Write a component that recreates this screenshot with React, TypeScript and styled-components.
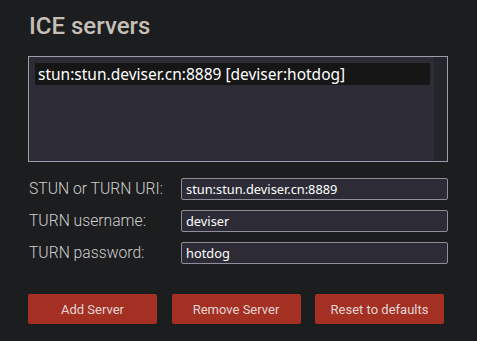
import styled, { createGlobalStyle } from 'styled-components';

const GlobalStyle = createGlobalStyle`
  html, body {
    margin: 0;
    padding: 0;
    background: #1c1d1f;
  }
`;

const Page = styled.div`
  padding: 10px 29px 0 28px;
  width: 477px;
  height: 341px;
  box-sizing: border-box;
  font-family: Roboto, 'Liberation Sans', sans-serif;
`;

const Title = styled.h2`
  margin: 0 0 14px 1px;
  font-size: 24px;
  font-weight: 500;
  line-height: 32px;
  color: #c6bfb7;
`;

const ListBox = styled.div`
  display: flex;
  width: 420px;
  height: 106px;
  box-sizing: border-box;
  border: 1px solid #9d9caa;
  background: #2c2b36;
`;

const Options = styled.div`
  flex: 1;
  padding: 6px 4px 0 6px;
`;

const Option = styled.div<{ $selected?: boolean }>`
  height: 22px;
  line-height: 22px;
  padding-left: 3px;
  background: ${(p) => (p.$selected ? '#161616' : 'transparent')};
  color: #ffffff;
  font-family: 'Noto Sans', 'DejaVu Sans', sans-serif;
  font-size: 15.5px;
  white-space: nowrap;
`;

const ScrollTrack = styled.div`
  width: 13px;
  background: #23252a;
`;

const Form = styled.div`
  display: grid;
  grid-template-columns: 153px 267px;
  row-gap: 10px;
  margin-top: 16px;
`;

const Label = styled.label`
  font-size: 15.7px;
  font-weight: 300;
  color: #cfcfcf;
  line-height: 22px;
  padding-left: 1px;
`;

const Input = styled.input`
  height: 22px;
  box-sizing: border-box;
  border: 1px solid #8f8f9c;
  border-radius: 2px;
  background: #2c2b36;
  color: #ffffff;
  font-family: 'Noto Sans', 'DejaVu Sans', sans-serif;
  font-size: 12.8px;
  padding: 0 4px;
  outline: none;
`;

const Buttons = styled.div`
  display: flex;
  gap: 14.5px;
  margin-top: 30px;
`;

const Button = styled.button`
  width: 129px;
  height: 30px;
  border: none;
  border-radius: 2px;
  background: #a42f23;
  color: #e2d6d4;
  font-family: Roboto, 'Liberation Sans', sans-serif;
  font-size: 13px;
  padding: 0;
  cursor: pointer;
`;

const fields = [
  { label: 'STUN or TURN URI:', value: 'stun:stun.deviser.cn:8889' },
  { label: 'TURN username:', value: 'deviser' },
  { label: 'TURN password:', value: 'hotdog' },
];

export default function App() {
  return (
    <>
      <GlobalStyle />
      <Page>
        <Title>ICE servers</Title>
        <ListBox>
          <Options>
            <Option $selected>stun:stun.deviser.cn:8889 [deviser:hotdog]</Option>
          </Options>
          <ScrollTrack />
        </ListBox>
        <Form>
          {fields.map((f) => (
            <>
              <Label key={f.label + '-l'}>{f.label}</Label>
              <Input key={f.label + '-i'} defaultValue={f.value} />
            </>
          ))}
        </Form>
        <Buttons>
          <Button>Add Server</Button>
          <Button>Remove Server</Button>
          <Button>Reset to defaults</Button>
        </Buttons>
      </Page>
    </>
  );
}
